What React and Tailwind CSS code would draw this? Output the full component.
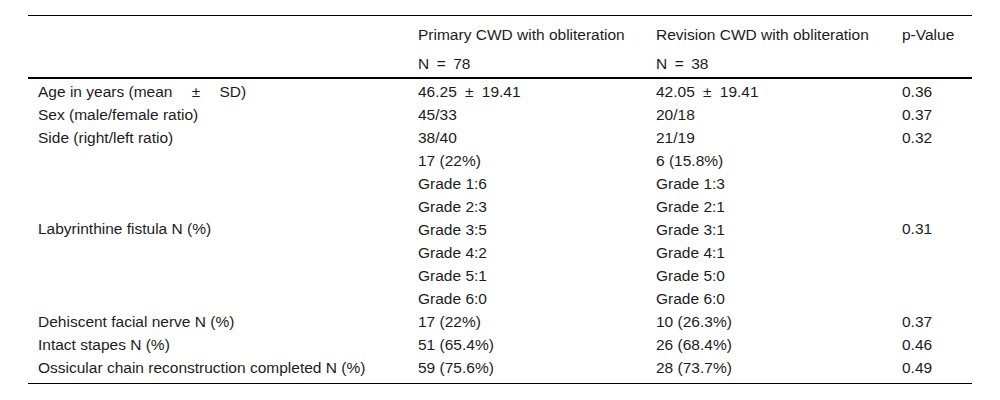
import React from "react";

export default function App() {
  const cell = "pl-[10px] pt-[3px] pb-[1px] align-top";
  const last = "pl-[10px] pt-[3px] pb-[6px] align-top";
  const h1 = "font-normal text-left pl-[10px] pt-[9px]";
  const h2 = "font-normal text-left pl-[10px] pt-[10px] pb-[4px]";
  return (
    <div
      className="w-[1000px] h-[400px] bg-white pt-[15px] px-[28px]"
      style={{ fontFamily: '"Liberation Sans", Arial, sans-serif' }}
    >
      <table className="w-[944px] table-fixed border-collapse text-[15.5px] leading-[19px] text-[#1c1c1c]">
        <colgroup>
          <col className="w-[380px]" />
          <col className="w-[238px]" />
          <col className="w-[246px]" />
          <col className="w-[80px]" />
        </colgroup>
        <thead>
          <tr className="border-t border-black">
            <th className={h1}></th>
            <th className={h1}>Primary CWD with obliteration</th>
            <th className={h1}>Revision CWD with obliteration</th>
            <th className={h1}>p-Value</th>
          </tr>
          <tr className="border-b-2 border-black">
            <th className={h2}></th>
            <th className={h2}>
              N<span className="inline-block w-[24px] text-center">=</span>78
            </th>
            <th className={h2}>
              N<span className="inline-block w-[24px] text-center">=</span>38
            </th>
            <th className={h2}></th>
          </tr>
        </thead>
        <tbody>
          <tr>
            <td className={cell}>
              Age in years (mean<span className="inline-block w-[47px] text-center">±</span>SD)
            </td>
            <td className={cell}>
              46.25<span className="inline-block w-[25px] text-center">±</span>19.41
            </td>
            <td className={cell}>
              42.05<span className="inline-block w-[25px] text-center">±</span>19.41
            </td>
            <td className={cell}>0.36</td>
          </tr>
          <tr>
            <td className={cell}>Sex (male/female ratio)</td>
            <td className={cell}>45/33</td>
            <td className={cell}>20/18</td>
            <td className={cell}>0.37</td>
          </tr>
          <tr>
            <td className={cell}>Side (right/left ratio)</td>
            <td className={cell}>38/40</td>
            <td className={cell}>21/19</td>
            <td className={cell}>0.32</td>
          </tr>
          <tr>
            <td rowSpan={7} className="pl-[10px] align-middle">Labyrinthine fistula N (%)</td>
            <td className={cell}>17 (22%)</td>
            <td className={cell}>6 (15.8%)</td>
            <td rowSpan={7} className="pl-[10px] align-middle">0.31</td>
          </tr>
          <tr>
            <td className={cell}>Grade 1:6</td>
            <td className={cell}>Grade 1:3</td>
          </tr>
          <tr>
            <td className={cell}>Grade 2:3</td>
            <td className={cell}>Grade 2:1</td>
          </tr>
          <tr>
            <td className={cell}>Grade 3:5</td>
            <td className={cell}>Grade 3:1</td>
          </tr>
          <tr>
            <td className={cell}>Grade 4:2</td>
            <td className={cell}>Grade 4:1</td>
          </tr>
          <tr>
            <td className={cell}>Grade 5:1</td>
            <td className={cell}>Grade 5:0</td>
          </tr>
          <tr>
            <td className={cell}>Grade 6:0</td>
            <td className={cell}>Grade 6:0</td>
          </tr>
          <tr>
            <td className={cell}>Dehiscent facial nerve N (%)</td>
            <td className={cell}>17 (22%)</td>
            <td className={cell}>10 (26.3%)</td>
            <td className={cell}>0.37</td>
          </tr>
          <tr>
            <td className={cell}>Intact stapes N (%)</td>
            <td className={cell}>51 (65.4%)</td>
            <td className={cell}>26 (68.4%)</td>
            <td className={cell}>0.46</td>
          </tr>
          <tr className="border-b border-black">
            <td className={last}>Ossicular chain reconstruction completed N (%)</td>
            <td className={last}>59 (75.6%)</td>
            <td className={last}>28 (73.7%)</td>
            <td className={last}>0.49</td>
          </tr>
        </tbody>
      </table>
    </div>
  );
}
